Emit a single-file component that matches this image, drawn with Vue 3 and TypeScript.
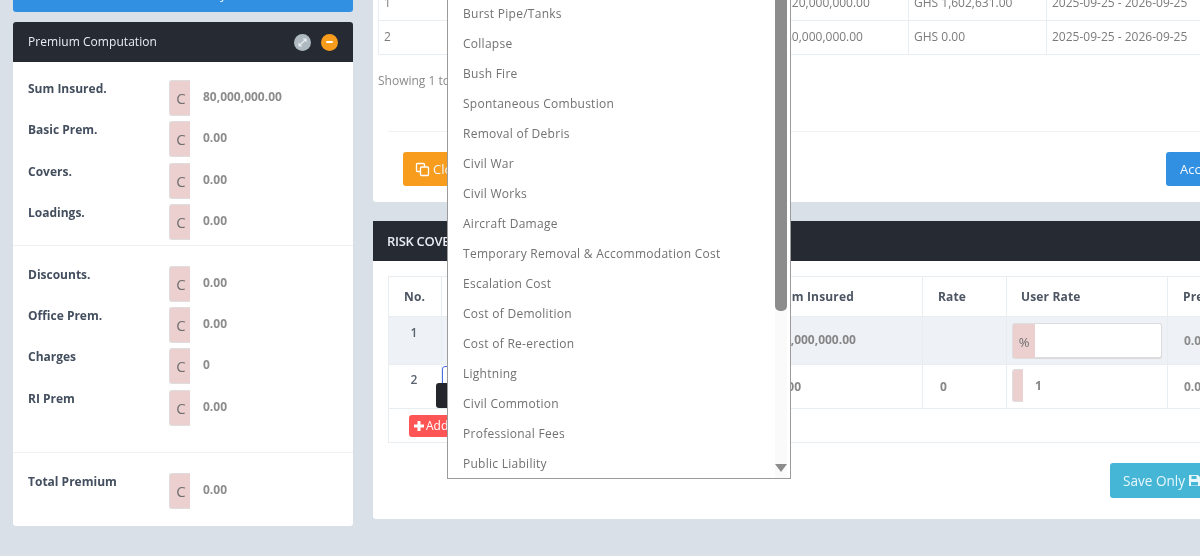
<script setup lang="ts">
interface Stat { label: string; value: string }
const groupOne: Stat[] = [
  { label: 'Sum Insured.', value: '80,000,000.00' },
  { label: 'Basic Prem.', value: '0.00' },
  { label: 'Covers.', value: '0.00' },
  { label: 'Loadings.', value: '0.00' },
]
const groupTwo: Stat[] = [
  { label: 'Discounts.', value: '0.00' },
  { label: 'Office Prem.', value: '0.00' },
  { label: 'Charges', value: '0' },
  { label: 'RI Prem', value: '0.00' },
]
const groupThree: Stat[] = [{ label: 'Total Premium', value: '0.00' }]
const groups = [
  { key: 'a', rows: groupOne },
  { key: 'b', rows: groupTwo },
  { key: 'c', rows: groupThree },
]
const perils: string[] = [
  'Burst Pipe/Tanks', 'Collapse', 'Bush Fire', 'Spontaneous Combustion', 'Removal of Debris',
  'Civil War', 'Civil Works', 'Aircraft Damage', 'Temporary Removal & Accommodation Cost',
  'Escalation Cost', 'Cost of Demolition', 'Cost of Re-erection', 'Lightning', 'Civil Commotion',
  'Professional Fees', 'Public Liability',
]
</script>

<template>
  <div class="page">
    <div class="columns">
      <aside class="left">
        <button class="top-btn" type="button">Calculate Policy</button>
        <section class="card summary">
          <header class="card-head">
            <span class="head-title">Premium Computation</span>
            <span class="head-tools">
              <span class="tool tool-grey">
                <svg width="11" height="11" viewBox="0 0 11 11"><path d="M2.500 8.500 8.500 2.500M6 2h3v3M2 6v3h3" fill="none" stroke="#e8ecef" stroke-width="1.200"/></svg>
              </span>
              <span class="tool tool-orange"><span class="minus"></span></span>
            </span>
          </header>
          <div v-for="g in groups" :key="g.key" class="group" :class="'group-' + g.key">
            <div v-for="r in g.rows" :key="r.label" class="stat">
              <span class="stat-label">{{ r.label }}</span>
              <span class="addon">C</span>
              <span class="stat-value">{{ r.value }}</span>
            </div>
          </div>
        </section>
      </aside>

      <main class="right">
        <section class="card listing">
          <table class="tbl tbl-one">
            <colgroup>
              <col class="c1" /><col class="c2" /><col class="c3" /><col class="c4" /><col class="c5" />
            </colgroup>
            <tbody>
              <tr>
                <td>1</td><td>Fire &amp; Allied Perils</td><td>120,000,000.00</td><td>GHS 1,602,631.00</td><td>2025-09-25 - 2026-09-25</td>
              </tr>
              <tr>
                <td>2</td><td>Fire &amp; Allied Perils</td><td>80,000,000.00</td><td>GHS 0.00</td><td>2025-09-25 - 2026-09-25</td>
              </tr>
            </tbody>
          </table>
          <p class="showing">Showing 1 to 2 of 2 entries</p>
          <div class="actions">
            <button class="btn btn-orange" type="button">
              <svg width="15" height="15" viewBox="0 0 15 15" fill="none" stroke="#fff" stroke-width="1.300" stroke-linejoin="round"><path d="M9.500 5V2.500a1 1 0 0 0-1-1h-6a1 1 0 0 0-1 1v6a1 1 0 0 0 1 1H5"/><path d="M6.500 5h6a1 1 0 0 1 1 1v6.500a1 1 0 0 1-1 1h-6a1 1 0 0 1-1-1V6a1 1 0 0 1 1-1z"/></svg>
              Clone Risk
            </button>
            <button class="btn btn-blue" type="button">Accept</button>
          </div>
        </section>

        <section class="card covers">
          <header class="card-head cover-head"><span class="cover-title">RISK COVERS</span></header>
          <div class="cover-body">
            <table class="tbl tbl-two">
              <colgroup>
                <col class="d1" /><col class="d2" /><col class="d3" /><col class="d4" /><col class="d5" /><col class="d6" />
              </colgroup>
              <thead>
                <tr>
                  <th class="center">No.</th><th>Cover</th><th class="th-sum">Sum Insured</th><th>Rate</th><th class="th-user">User Rate</th><th>Premium</th>
                </tr>
              </thead>
              <tbody>
                <tr class="row-tint">
                  <td class="center top">1</td>
                  <td></td>
                  <td class="strong sum">80,000,000.00</td>
                  <td></td>
                  <td class="ur"><div class="rate-group"><span class="rate-add">%</span><span class="rate-input"></span></div></td>
                  <td class="prem">0.00</td>
                </tr>
                <tr class="row-two">
                  <td class="center top">2</td>
                  <td class="pick"><span class="select-box"></span><span class="tip"></span></td>
                  <td class="strong sum">0.00</td>
                  <td class="strong rate-val">0</td>
                  <td class="ur"><div class="rate-group"><span class="rate-add thin"></span><span class="rate-num">1</span></div></td>
                  <td class="prem">0.00</td>
                </tr>
                <tr class="row-add">
                  <td colspan="6">
                    <button class="btn-add" type="button">
                      <svg width="10" height="10" viewBox="0 0 10 10"><path d="M3.500 0h3v3.500H10v3H6.500V10h-3V6.500H0v-3h3.500z" fill="#fff"/></svg>
                      Add
                    </button>
                  </td>
                </tr>
              </tbody>
            </table>
            <div class="save-row">
              <button class="btn btn-save" type="button">
                Save Only
                <svg width="13" height="13" viewBox="0 0 13 13"><path d="M1 1h9l2 2v9H1z" fill="#e8f7fb"/><path d="M3.500 2h5v3h-5zM3 8h7v3.500H3z" fill="#46b6d6"/></svg>
              </button>
            </div>
          </div>
        </section>
      </main>
    </div>

    <div class="dropdown">
      <ul class="peril-list">
        <li v-for="p in perils" :key="p">{{ p }}</li>
      </ul>
      <div class="scroll">
        <span class="thumb"></span>
        <span class="arrow"></span>
      </div>
    </div>
  </div>
</template>

<style>
html, body { margin: 0; background: #d9e0e8; }
</style>

<style scoped>
.page {
  position: relative;
  width: 1200px;
  height: 556px;
  overflow: hidden;
  background: #d9e0e8;
  font-family: "Open Sans", "Liberation Sans", sans-serif;
  font-size: 12px;
  color: #777;
  filter: blur(0.45px);
}
.columns { display: flex; gap: 20px; padding-left: 13px; align-items: flex-start; }
.left { width: 340px; flex: none; margin-top: -24px; display: flex; flex-direction: column; gap: 10px; }
.right { width: 1000px; flex: none; margin-top: -30px; display: flex; flex-direction: column; gap: 19px; }
button { font-family: inherit; border: 0; }
.top-btn { height: 36px; background: #3290e3; color: #fff; border-radius: 3px; font-size: 12px; }
.card { background: #fff; border-radius: 3px; }
.card-head { height: 40px; background: #252a33; display: flex; align-items: center; color: #e9edf2; border-radius: 3px 3px 0 0; }
.summary { height: 504px; }
.summary .card-head { padding: 0 15px; justify-content: space-between; }
.head-title { font-size: 12px; font-weight: 500; letter-spacing: 0.05px; margin-top: -1px; }
.head-tools { display: flex; gap: 10px; }
.tool { width: 17px; height: 17px; border-radius: 50%; display: flex; align-items: center; justify-content: center; }
.tool-grey { background: #aeb9c1; }
.tool-orange { background: #f79c1c; }
.minus { width: 7px; height: 2px; background: #fff; border-radius: 1px; }
.group { padding: 0 15px; border-bottom: 1px solid #eef0f3; display: flex; flex-direction: column; gap: 5.300px; }
.group-a { padding-top: 18px; padding-bottom: 5px; }
.group-b { padding-top: 20px; padding-bottom: 26px; }
.group-c { padding-top: 20px; border-bottom: 0; }
.stat { height: 36px; display: flex; }
.stat-label { width: 141px; flex: none; font-weight: 700; font-size: 12px; color: #434e5e; padding-top: 1px; line-height: 16px; }
.addon { width: 21px; flex: none; background: #eccfcf; border: 1px solid #dedede; border-right: 0; border-radius: 3px 0 0 3px; box-sizing: border-box; color: #6f6f6f; font-size: 15px; display: flex; align-items: center; justify-content: center; padding-left: 2px; }
.stat-value { margin-left: 13px; font-weight: 700; color: #8c8c8c; line-height: 34px; }

.listing { height: 232px; box-sizing: border-box; padding: 16px 0 0 5px; }
.tbl { border-collapse: collapse; table-layout: fixed; }
.tbl td, .tbl th { border: 1px solid #e8edf2; padding: 0 5px; white-space: nowrap; overflow: hidden; text-align: left; }
.tbl-one { width: 995px; }
.tbl-one tr { height: 34px; }
.tbl-one td { color: #7b7b7b; padding-bottom: 3px; }
.tbl-one .c1 { width: 70px; } .tbl-one .c2 { width: 331px; } .tbl-one .c3 { width: 129px; } .tbl-one .c4 { width: 138px; } .tbl-one .c5 { width: 327px; }
.showing { margin: 18px 0 0; color: #8a8a8a; line-height: 16px; }
.actions { margin: 42px 0 0 10px; border-top: 1px solid #eef0f3; padding: 20px 0 0 15px; display: flex; justify-content: space-between; }
.btn { height: 34px; border-radius: 3px; color: #f2f7fb; font-size: 13px; padding: 0 12px; display: inline-flex; align-items: center; gap: 3px; }
.btn-orange { background: #f79c1c; width: 120px; }
.btn-blue { background: #3290e3; width: 160px; padding-left: 14px; }
.actions .btn-blue { margin-right: 47px; }

.covers { height: 298px; }
.cover-head { padding-left: 14px; border-radius: 0; }
.cover-title { font-size: 13px; font-weight: 600; letter-spacing: -0.3px; }
.cover-body { padding: 15px 0 0 15px; }
.tbl-two { width: 985px; }
.tbl-two .d1 { width: 53px; } .tbl-two .d2 { width: 329px; } .tbl-two .d3 { width: 152px; } .tbl-two .d4 { width: 84px; } .tbl-two .d5 { width: 161px; } .tbl-two .d6 { width: 206px; }
.tbl-two th { height: 39px; font-weight: 700; color: #4d5563; padding: 0 15px; font-size: 12px; letter-spacing: 0.15px; }
.tbl-two th.center, .tbl-two td.center { text-align: center; padding-right: 17px; }
.tbl-two .th-sum { padding-left: 6px; }
.tbl-two .th-user { padding-left: 14px; }
.tbl-two td { padding: 0 15px; height: 44px; box-sizing: border-box; }
.row-tint { background: #eef1f5; }
.row-tint td { height: 48px; }
.tbl-two .row-tint td.sum { padding-bottom: 2px; }
.center.top { vertical-align: top; padding-top: 7px; font-weight: 600; color: #5a6270; }
.row-two .center.top { padding-top: 6px; }
.strong { font-weight: 700; color: #868686; }
.tbl-two td.sum { padding-left: 6px; }
.tbl-two td.rate-val { padding-left: 17px; }
.prem { font-weight: 700; color: #8c8c8c; }
.tbl-two td.prem { padding-left: 16px; }
.tbl-two td.ur { padding: 0 5px; }
.rate-group { display: flex; align-items: stretch; height: 36px; }
.rate-add { width: 23px; background: #eccfcf; border: 1px solid #dedede; border-right: 0; border-radius: 3px 0 0 3px; box-sizing: border-box; color: #6f6f6f; font-size: 13px; display: flex; align-items: center; justify-content: center; padding-top: 2px; }
.rate-add.thin { width: 11px; height: 33px; }
.rate-input { width: 126px; height: 33px; background: #fff; border: 1px solid #dcdcdc; border-left: 0; border-radius: 0 3px 3px 0; box-shadow: 0 1px 1px #d9d9d9; }
.rate-num { margin-left: 12px; font-weight: 700; color: #868686; line-height: 33px; }
.tbl-two td.pick { position: relative; padding: 0; overflow: visible; }
.select-box { position: absolute; left: 0; top: 1px; width: 60px; height: 42px; border: 1.500px solid #4a6fe3; border-radius: 3px; box-sizing: border-box; }
.tip { position: absolute; left: -6px; top: 18px; width: 60px; height: 25px; background: #24262c; border-radius: 3px; }
.tbl-two .row-add td { height: 34px; padding-left: 20px; }
.btn-add { background: #ff5555; color: #fff; height: 22px; width: 70px; border-radius: 3px; font-size: 12px; padding: 0 5px; display: inline-flex; align-items: center; gap: 2px; }
.save-row { margin: 20px 0 0 722px; }
.btn-save { background: #46b6d6; width: 130px; height: 35px; gap: 3px; justify-content: flex-start; font-size: 13.600px; color: #e8f7fb; padding-left: 13px; }

.dropdown { position: absolute; left: 447px; top: -40px; width: 344px; height: 519px; box-sizing: border-box; background: #fff; border: 1.500px solid #9b9b9b; overflow: hidden; }
.peril-list { list-style: none; margin: 0; padding: 37.500px 15px 0; }
.peril-list li { height: 30px; line-height: 30px; color: #717171; font-size: 12px; letter-spacing: 0.27px; white-space: nowrap; }
.scroll { position: absolute; right: 3px; top: 0; bottom: 0; width: 12px; background: #fafafa; }
.thumb { position: absolute; left: 0; top: 0; width: 12px; height: 350px; background: #8c8c8c; border-radius: 0 0 5px 5px; }
.arrow { position: absolute; left: 0; bottom: 6px; width: 0; height: 0; border-left: 6px solid transparent; border-right: 6px solid transparent; border-top: 8px solid #8c8c8c; }
</style>
